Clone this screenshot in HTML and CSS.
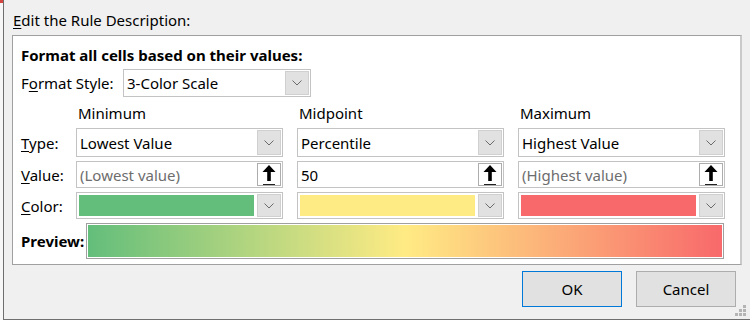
FILE: index.html
```html
<!DOCTYPE html>
<html>
<head>
<meta charset="utf-8">
<link rel="stylesheet" href="styles.css">
</head>
<body>
<div class="screen">
  <div class="sheet"></div>
  <div class="dialog">
    <div class="title"><u>E</u>dit the Rule Description:</div>
    <div class="group">
      <div class="heading">Format all cells based on their values:</div>
      <div class="style-row">
        <span class="style-label">F<u>o</u>rmat Style:</span>
        <div class="combo style-combo">
          <span class="combo-text">3-Color Scale</span>
          <span class="drop"><svg width="10" height="6" viewBox="0 0 10 6"><path d="M0.5 0.5 L5 5 L9.5 0.5" fill="none" stroke="#6b6b6b" stroke-width="1"/></svg></span>
        </div>
      </div>
      <div class="grid">
        <span></span>
        <span class="colhead">Minimum</span>
        <span class="colhead">Midpoint</span>
        <span class="colhead">Maximum</span>

        <span class="label"><u>T</u>ype:</span>
        <div class="combo"><span class="combo-text">Lowest Value</span><span class="drop"><svg width="10" height="6" viewBox="0 0 10 6"><path d="M0.5 0.5 L5 5 L9.5 0.5" fill="none" stroke="#6b6b6b" stroke-width="1"/></svg></span></div>
        <div class="combo"><span class="combo-text">Percentile</span><span class="drop"><svg width="10" height="6" viewBox="0 0 10 6"><path d="M0.5 0.5 L5 5 L9.5 0.5" fill="none" stroke="#6b6b6b" stroke-width="1"/></svg></span></div>
        <div class="combo"><span class="combo-text">Highest Value</span><span class="drop"><svg width="10" height="6" viewBox="0 0 10 6"><path d="M0.5 0.5 L5 5 L9.5 0.5" fill="none" stroke="#6b6b6b" stroke-width="1"/></svg></span></div>

        <span class="label"><u>V</u>alue:</span>
        <div class="field"><span class="field-text placeholder">(Lowest value)</span><span class="pick"><svg width="16" height="22" viewBox="0 0 16 22"><path d="M8 1 L14.5 8 L9.8 8 L9.8 17 L6.2 17 L6.2 8 L1.5 8 Z" fill="#000"/><rect x="2" y="20" width="12" height="1" fill="#222"/></svg></span></div>
        <div class="field"><span class="field-text">50</span><span class="pick"><svg width="16" height="22" viewBox="0 0 16 22"><path d="M8 1 L14.5 8 L9.8 8 L9.8 17 L6.2 17 L6.2 8 L1.5 8 Z" fill="#000"/><rect x="2" y="20" width="12" height="1" fill="#222"/></svg></span></div>
        <div class="field"><span class="field-text placeholder">(Highest value)</span><span class="pick"><svg width="16" height="22" viewBox="0 0 16 22"><path d="M8 1 L14.5 8 L9.8 8 L9.8 17 L6.2 17 L6.2 8 L1.5 8 Z" fill="#000"/><rect x="2" y="20" width="12" height="1" fill="#222"/></svg></span></div>

        <span class="label"><u>C</u>olor:</span>
        <div class="combo color-combo"><span class="swatch green"></span><span class="drop"><svg width="10" height="6" viewBox="0 0 10 6"><path d="M0.5 0.5 L5 5 L9.5 0.5" fill="none" stroke="#6b6b6b" stroke-width="1"/></svg></span></div>
        <div class="combo color-combo"><span class="swatch yellow"></span><span class="drop"><svg width="10" height="6" viewBox="0 0 10 6"><path d="M0.5 0.5 L5 5 L9.5 0.5" fill="none" stroke="#6b6b6b" stroke-width="1"/></svg></span></div>
        <div class="combo color-combo"><span class="swatch red"></span><span class="drop"><svg width="10" height="6" viewBox="0 0 10 6"><path d="M0.5 0.5 L5 5 L9.5 0.5" fill="none" stroke="#6b6b6b" stroke-width="1"/></svg></span></div>
      </div>
      <div class="preview-row">
        <span class="preview-label">Preview:</span>
        <div class="preview"><div class="preview-bar"></div></div>
      </div>
    </div>
    <div class="buttons">
      <button class="btn ok">OK</button>
      <button class="btn">Cancel</button>
    </div>
    <svg class="grip" width="12" height="12" viewBox="0 0 12 12">
      <rect x="8" y="0" width="3" height="3" fill="#b4b4b4"/>
      <rect x="4" y="4" width="3" height="3" fill="#b4b4b4"/>
      <rect x="8" y="4" width="3" height="3" fill="#b4b4b4"/>
      <rect x="0" y="8" width="3" height="3" fill="#b4b4b4"/>
      <rect x="4" y="8" width="3" height="3" fill="#b4b4b4"/>
      <rect x="8" y="8" width="3" height="3" fill="#b4b4b4"/>
    </svg>
  </div>
</div>
</body>
</html>
```

FILE: styles.css
```css
* { box-sizing: border-box; }
html, body {
  margin: 0;
  padding: 0;
  width: 750px;
  height: 321px;
  overflow: hidden;
  background: #ffffff;
  font-family: "Noto Sans", "Open Sans", sans-serif;
  font-size: 15px;
  color: #000;
}
u { text-decoration: underline; text-underline-offset: 2px; text-decoration-thickness: 1px; }

.screen {
  display: flex;
  width: 750px;
  height: 321px;
}
.sheet {
  width: 3px;
  height: 320px;
  background: linear-gradient(#d4463f 0 3px, #f7f7f7 3px);
}
.dialog {
  position: relative;
  flex: 1;
  height: 320px;
  background: #f0f0f0;
  border-left: 1px solid #6f6f6f;
  border-bottom: 1px solid #6f6f6f;
  display: flex;
  flex-direction: column;
}
.title {
  margin: 10px 0 0 9px;
  height: 20px;
  line-height: 20px;
}
.group {
  margin: 5px 0 0 8px;
  width: 730px;
  background: #fff;
  border-top: 1px solid #a0a0a0;
  border-left: 1px solid #a0a0a0;
  border-bottom: 1px solid #a0a0a0;
  border-right: 2px solid #cacaca;
  padding: 9px 0 5px 8px;
}
.heading {
  font-weight: bold;
  height: 20px;
  line-height: 20px;
}
.style-row {
  display: flex;
  align-items: center;
  margin-top: 4px;
}
.style-label {
  width: 102px;
}
.combo, .field {
  display: flex;
  align-items: stretch;
  border: 1px solid #c3c3c3;
  background: #fff;
  height: 29px;
}
.style-combo {
  width: 188px;
  height: 28px;
}
.combo-text, .field-text {
  flex: 1;
  padding-left: 3px;
  display: flex;
  align-items: center;
  white-space: nowrap;
  overflow: hidden;
}
.placeholder { color: #6d6d6d; }
.drop {
  width: 24px;
  margin: 1px;
  background: #e1e1e1;
  border: 1px solid #d0d0d0;
  display: flex;
  align-items: center;
  justify-content: center;
}
.grid {
  display: grid;
  grid-template-columns: 41px 207px 207px 207px;
  grid-template-rows: 21px 29px 27px 27px;
  column-gap: 14px;
  row-gap: 4px;
  margin-top: 6px;
  align-items: center;
}
.grid .combo, .grid .field { height: 100%; }
.colhead {
  padding-left: 2px;
  line-height: 21px;
}
.label { white-space: nowrap; }
.field .pick {
  width: 24px;
  margin: 1px;
  background: #fff;
  border: 1px solid #adadad;
  display: flex;
  align-items: center;
  justify-content: center;
}
.color-combo .swatch {
  flex: 1;
  margin: 2px 2px 2px 2px;
}
.swatch.green { background: #63be7b; }
.swatch.yellow { background: #ffeb84; }
.swatch.red { background: #f8696b; }

.preview-row {
  display: flex;
  align-items: center;
  margin-top: 4px;
}
.preview-label {
  font-weight: bold;
  width: 65px;
}
.preview {
  width: 638px;
  height: 36px;
  border: 1px solid #a0a0a0;
  padding: 1px;
  background: #fff;
}
.preview-bar {
  height: 100%;
  background: linear-gradient(to right, #63be7b, #ffeb84 50%, #f8696b);
}
.buttons {
  display: flex;
  justify-content: flex-end;
  gap: 14px;
  margin: 6px 14px 0 0;
}
.btn {
  width: 100px;
  height: 36px;
  background: #e1e1e1;
  border: 1px solid #adadad;
  font-family: "Noto Sans", "Open Sans", sans-serif;
  font-size: 15px;
  color: #000;
  padding: 0;
}
.btn.ok { border-color: #0078d7; }
.grip {
  position: absolute;
  right: 3px;
  bottom: 2px;
}
```
